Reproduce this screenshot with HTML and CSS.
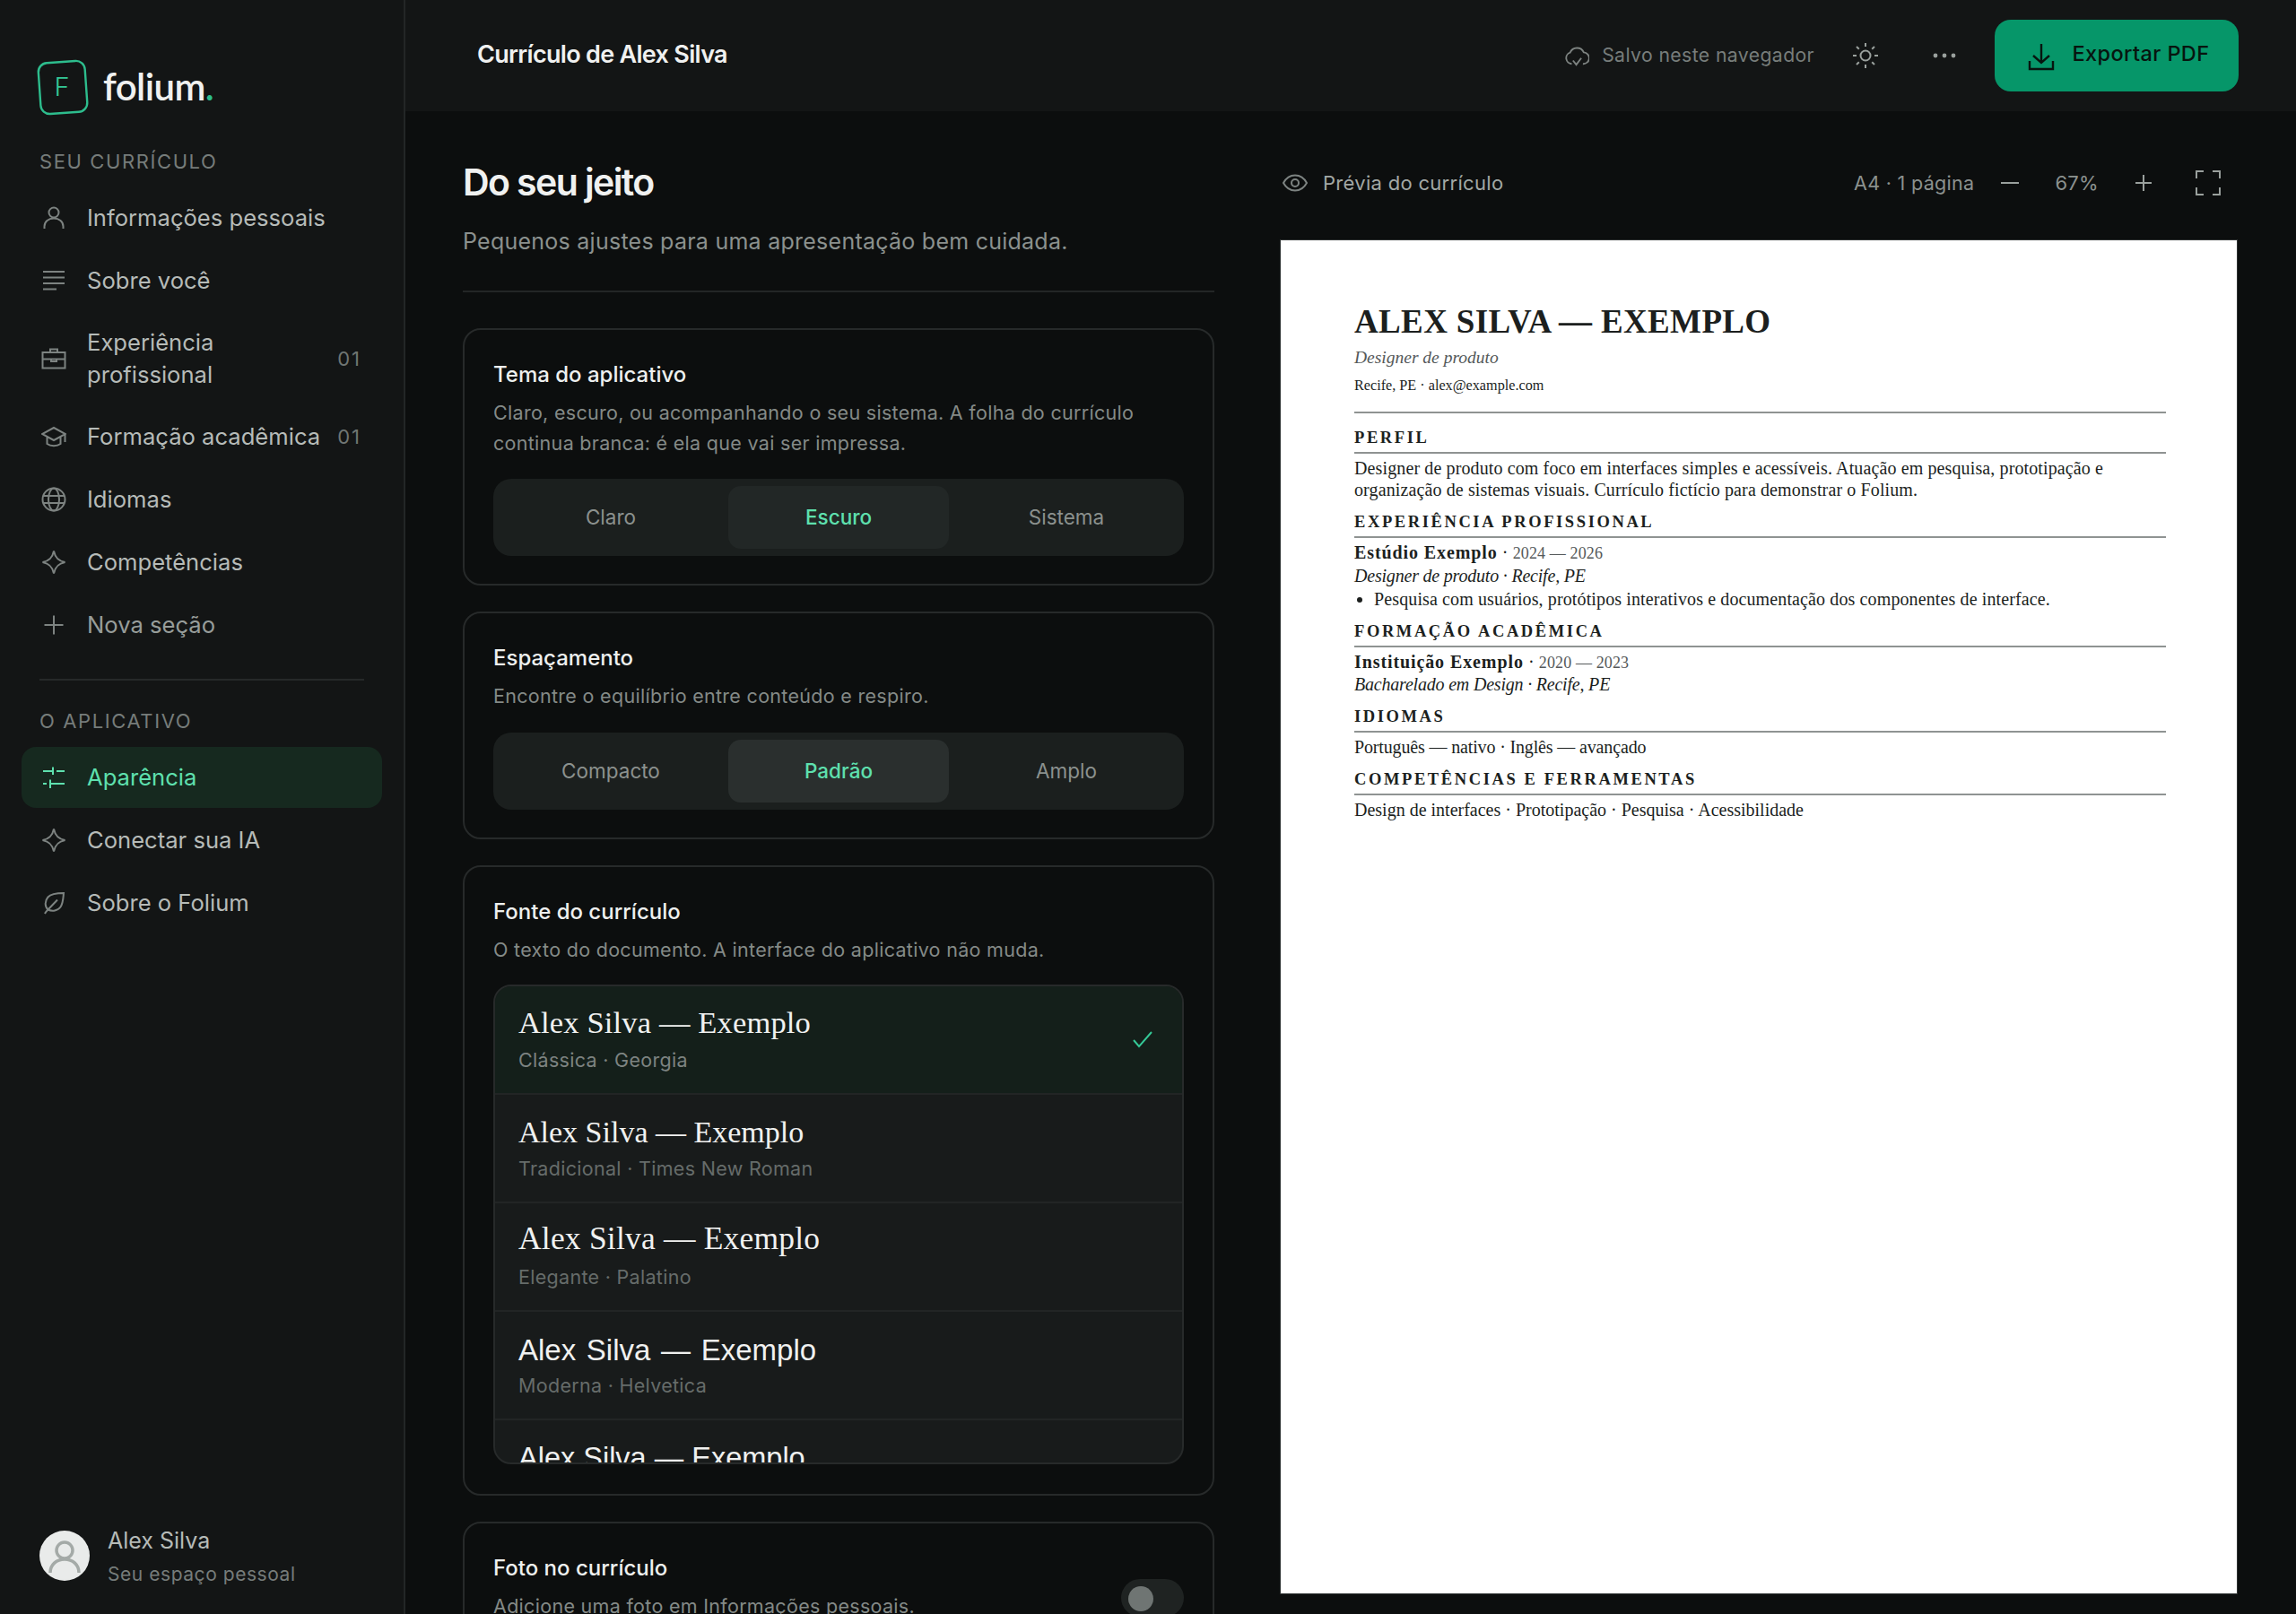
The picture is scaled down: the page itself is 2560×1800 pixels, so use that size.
FILE: index.html
```html
<!DOCTYPE html>
<html lang="pt-BR">
<head>
<meta charset="utf-8">
<title>Folium</title>
<link rel="stylesheet" href="styles.css">
</head>
<body>
<div class="app">
  <aside class="sidebar">
    <div class="brand">
      <svg class="brand-mark" viewBox="0 0 60 68" width="60" height="68"><rect x="4" y="6" width="52" height="57" rx="10" transform="rotate(-4 30 34)" fill="none" stroke="#2dbd8d" stroke-width="2.4"/><text x="29" y="44" text-anchor="middle" class="brand-f">F</text></svg>
      <span class="brand-name">folium<i>.</i></span>
    </div>
    <div class="nav-label">SEU CURRÍCULO</div>
    <nav class="nav">
      <a class="nav-item"><svg class="ico" viewBox="0 0 28 28"><circle cx="14" cy="8" r="5.5"/><path d="M3.500 26v-2.500c0-5.500 4.500-9 10.500-9s10.500 3.500 10.500 9V26"/></svg><span>Informações pessoais</span></a>
      <a class="nav-item"><svg class="ico" viewBox="0 0 28 28"><path d="M2 4h24M2 10.500h24M2 17h24M2 23.500h15"/></svg><span>Sobre você</span></a>
      <a class="nav-item nav-multi"><svg class="ico" viewBox="0 0 28 28"><rect x="1.500" y="7" width="25" height="17.500"/><path d="M10 7V3.500h8V7M1.500 14.500h25M11 14.500v2.500h6v-2.500"/></svg><span>Experiência profissional</span><b class="count">01</b></a>
      <a class="nav-item"><svg class="ico" viewBox="0 0 28 28"><path d="M14 4 1 11l13 7 13-7zM6.500 14.500V22c4 3 11 3 15 0v-7.500M26.500 11v9"/></svg><span>Formação acadêmica</span><b class="count">01</b></a>
      <a class="nav-item"><svg class="ico" viewBox="0 0 28 28"><circle cx="14" cy="14" r="12.500"/><ellipse cx="14" cy="14" rx="6" ry="12.500"/><path d="M2 10h24M2 18h24"/></svg><span>Idiomas</span></a>
      <a class="nav-item"><svg class="ico" viewBox="0 0 28 28"><path d="M14 1.500c1.500 7.500 5 11 12.500 12.500-7.500 1.500-11 5-12.500 12.500C12.500 19 9 15.500 1.500 14 9 12.500 12.500 9 14 1.500z"/></svg><span>Competências</span></a>
      <a class="nav-item nav-add"><svg class="ico" viewBox="0 0 28 28"><path d="M14 3.500v21M3.500 14h21"/></svg><span>Nova seção</span></a>
    </nav>
    <hr class="nav-rule">
    <div class="nav-label nav-label-app">O APLICATIVO</div>
    <nav class="nav">
      <a class="nav-item active"><svg class="ico" viewBox="0 0 28 28"><path d="M2 7h11M17 7h9M13 2.500v8.500M2 21h4M10 21h16M10 16.500V26"/></svg><span>Aparência</span></a>
      <a class="nav-item"><svg class="ico" viewBox="0 0 28 28"><path d="M14 1.500c1.500 7.500 5 11 12.500 12.500-7.500 1.500-11 5-12.500 12.500C12.500 19 9 15.500 1.500 14 9 12.500 12.500 9 14 1.500z"/></svg><span>Conectar sua IA</span></a>
      <a class="nav-item"><svg class="ico" viewBox="0 0 28 28"><path d="M4 26c1-2 2-3 3.500-4.500M25 3c-6 0-14 .5-17.500 4.500C3.500 12 4 18.500 7.500 21.500c4.500 2 11 1.500 14-3C24.500 14 24.500 8 25 3zM7.500 21.500 18 10.500"/></svg><span>Sobre o Folium</span></a>
    </nav>
    <div class="user">
      <div class="avatar"><svg viewBox="0 0 56 56" width="56" height="56"><circle cx="28" cy="22" r="9" /><path d="M12 47c0-9 7-15 16-15s16 6 16 15"/></svg></div>
      <div class="user-text"><div class="user-name">Alex Silva</div><div class="user-sub">Seu espaço pessoal</div></div>
    </div>
  </aside>
  <div class="content">
    <header class="topbar">
      <div class="doc-title">Currículo de Alex Silva</div>
      <div class="saved"><svg class="ico-s" viewBox="0 0 30 26"><path d="M9 23a7 7 0 0 1-2-13.600A9 9 0 0 1 23.500 9a7 7 0 0 1-1 14M10.500 19l4 5 6-8"/></svg><span>Salvo neste navegador</span></div>
      <svg class="sun" viewBox="0 0 30 30"><circle cx="15" cy="15" r="5.500"/><path d="M15 1v4M15 25v4M1 15h4M25 15h4M5 5l2.800 2.800M22.200 22.200 25 25M5 25l2.800-2.800M22.200 7.800 25 5"/></svg>
      <svg class="dots" viewBox="0 0 26 6"><circle cx="3" cy="3" r="2.400"/><circle cx="13" cy="3" r="2.400"/><circle cx="23" cy="3" r="2.400"/></svg>
      <button class="export"><svg class="ico-d" viewBox="0 0 30 32"><path d="M15 2v21M6 15l9 8 9-8M2 21v9h26v-9"/></svg><span>Exportar PDF</span></button>
    </header>
    <div class="workspace">
      <section class="panel">
        <h1 class="panel-title">Do seu jeito</h1>
        <p class="panel-sub">Pequenos ajustes para uma apresentação bem cuidada.</p>
        <hr class="panel-rule">
        <div class="card">
          <h2>Tema do aplicativo</h2>
          <p>Claro, escuro, ou acompanhando o seu sistema. A folha do currículo continua branca: é ela que vai ser impressa.</p>
          <div class="seg"><span>Claro</span><span class="on">Escuro</span><span>Sistema</span></div>
        </div>
        <div class="card">
          <h2>Espaçamento</h2>
          <p>Encontre o equilíbrio entre conteúdo e respiro.</p>
          <div class="seg seg-strong"><span>Compacto</span><span class="on">Padrão</span><span>Amplo</span></div>
        </div>
        <div class="card">
          <h2>Fonte do currículo</h2>
          <p>O texto do documento. A interface do aplicativo não muda.</p>
          <div class="fonts">
            <div class="font sel">
              <div class="sample f-georgia">Alex Silva — Exemplo</div>
              <div class="fname fname-sel">Clássica · Georgia</div>
              <svg class="check" viewBox="0 0 24 20"><path d="M2 11l6 7L22 2"/></svg>
            </div>
            <div class="font"><div class="sample f-times">Alex Silva — Exemplo</div><div class="fname">Tradicional · Times New Roman</div></div>
            <div class="font"><div class="sample f-pal">Alex Silva — Exemplo</div><div class="fname">Elegante · Palatino</div></div>
            <div class="font"><div class="sample f-helv">Alex Silva — Exemplo</div><div class="fname">Moderna · Helvetica</div></div>
            <div class="font"><div class="sample f-last">Alex Silva — Exemplo</div></div>
          </div>
        </div>
        <div class="card card-row">
          <div><h2>Foto no currículo</h2><p class="photo-note">Adicione uma foto em Informações pessoais.</p></div>
          <div class="toggle"><i></i></div>
        </div>
      </section>
      <section class="preview">
        <div class="preview-bar">
          <svg class="eye" viewBox="0 0 28 20"><path d="M1 10c3-5.500 7.500-8.500 13-8.500S24 4.500 27 10c-3 5.500-7.500 8.500-13 8.500S4 15.500 1 10z"/><circle cx="14" cy="10" r="4"/></svg>
          <span class="preview-title">Prévia do currículo</span>
          <span class="preview-meta">A4 · 1 página</span>
          <svg class="pv minus" viewBox="0 0 20 20"><path d="M0 10h20"/></svg>
          <span class="zoom">67%</span>
          <svg class="pv plus" viewBox="0 0 20 20"><path d="M10 1v18M1 10h18"/></svg>
          <svg class="pv full" viewBox="0 0 28 28"><path d="M1 9V1h8M19 1h8v8M27 19v8h-8M9 27H1v-8"/></svg>
        </div>
        <article class="paper">
          <h1 class="cv-name">ALEX SILVA — EXEMPLO</h1>
          <div class="cv-role">Designer de produto</div>
          <div class="cv-contact">Recife, PE · alex@example.com</div>
          <h3 class="cv-h cv-first">PERFIL</h3>
          <p class="cv-p">Designer de produto com foco em interfaces simples e acessíveis. Atuação em pesquisa, prototipação e organização de sistemas visuais. Currículo fictício para demonstrar o Folium.</p>
          <h3 class="cv-h">EXPERIÊNCIA PROFISSIONAL</h3>
          <p class="cv-p"><b>Estúdio Exemplo</b> · <small>2024 — 2026</small></p>
          <p class="cv-p"><em>Designer de produto · Recife, PE</em></p>
          <ul class="cv-ul"><li>Pesquisa com usuários, protótipos interativos e documentação dos componentes de interface.</li></ul>
          <h3 class="cv-h">FORMAÇÃO ACADÊMICA</h3>
          <p class="cv-p"><b>Instituição Exemplo</b> · <small>2020 — 2023</small></p>
          <p class="cv-p"><em>Bacharelado em Design · Recife, PE</em></p>
          <h3 class="cv-h">IDIOMAS</h3>
          <p class="cv-p cv-lang">Português — nativo · Inglês — avançado</p>
          <h3 class="cv-h">COMPETÊNCIAS E FERRAMENTAS</h3>
          <p class="cv-p cv-skills">Design de interfaces · Prototipação · Pesquisa · Acessibilidade</p>
        </article>
      </section>
    </div>
  </div>
</div>
</body>
</html>
```
FILE: styles.css
```css
* { box-sizing: border-box; }
html, body { margin: 0; padding: 0; }
body { background: #0c0e0e; color: #e8eae9; font-family: Inter, "Noto Sans", sans-serif; }
.app { display: flex; width: 2560px; height: 1800px; overflow: hidden; }

.sidebar { width: 452px; flex: none; background: #131515; border-right: 2px solid #232626; display: flex; flex-direction: column; padding: 63px 24px 0; }
.brand { display: flex; align-items: center; gap: 15px; margin-left: 16px; height: 68px; }
.brand-mark { flex: none; }
.brand-f { font: 300 29px Inter, sans-serif; fill: #34c896; }
.brand-name { font: 600 42px/1 Lato, sans-serif; color: #f0f1f0; letter-spacing: -0.6px; margin-top: -3px; }
.brand-name i { font-style: normal; color: #2dbd8d; }
.nav-label { font-size: 22px; line-height: 28px; letter-spacing: 1.6px; color: #767c7a; margin: 35px 0 0 20px; }
.nav-label-app { margin-top: 0; }
.nav { display: flex; flex-direction: column; gap: 2px; margin-top: 15px; }
.nav-label-app + .nav { margin-top: 15px; }
.nav-item { display: flex; align-items: center; gap: 23px; padding: 16px 23px 16px 22px; border-radius: 16px; font-size: 25.600px; line-height: 36px; color: #b6bbb8; }
.nav-multi { padding-top: 15px; padding-bottom: 15px; }
.nav-item span { flex: 1; }
.nav-add { color: #979d9a; }
.count { font-weight: 400; font-size: 22px; letter-spacing: 2px; color: #6f7573; margin-left: -12px; }
.ico { width: 28px; height: 28px; flex: none; fill: none; stroke: #7d8381; stroke-width: 2; }
.active { background: #16291f; color: #5ee0ae; }
.active .ico { stroke: #5ee0ae; }
.nav-rule { border: 0; height: 2px; background: #262929; margin: 26px 20px 31px; }
.user { margin-top: auto; margin-bottom: 27px; margin-left: 20px; display: flex; align-items: center; gap: 20px; }
.avatar { width: 56px; height: 56px; border-radius: 50%; background: #e9ebea; overflow: hidden; flex: none; }
.avatar svg { display: block; fill: none; stroke: #a4aaa7; stroke-width: 3.5; }
.user-text { margin-top: 4px; }
.user-name { font-size: 25px; line-height: 34px; color: #b6bbb8; }
.user-sub { font-size: 21px; line-height: 34px; letter-spacing: 0.550px; color: #767c7a; margin-top: 4px; }

.content { flex: 1; min-width: 0; display: flex; flex-direction: column; }
.topbar { height: 124px; flex: none; background: #131515; display: flex; align-items: center; padding: 0 64px 0 80px; }
.doc-title { font-size: 27px; font-weight: 600; letter-spacing: -0.7px; color: #f0f1f0; margin: -3px auto 0 0; }
.saved { display: flex; align-items: center; gap: 14px; font-size: 21.200px; letter-spacing: 0.4px; color: #777d7b; margin-top: -2px; }
.ico-s { width: 28px; height: 24px; fill: none; stroke: #7d8381; stroke-width: 2; margin-top: 2px; }
.sun { width: 30px; height: 30px; margin-left: 42px; fill: none; stroke: #9aa09d; stroke-width: 2; }
.dots { width: 26px; height: 6px; margin-left: 60px; fill: #9aa09d; }
.export { width: 272px; height: 80px; margin-left: 43px; border: 0; border-radius: 18px; background: #069669; display: flex; align-items: center; justify-content: center; gap: 20px; font: 500 23.500px Inter, sans-serif; letter-spacing: 0.4px; color: #07150f; padding: 0 0 6px 4px; }
.ico-d { width: 30px; height: 32px; fill: none; stroke: #07150f; stroke-width: 2.400; margin-top: 8px; }

.workspace { flex: 1; min-height: 0; display: flex; padding: 0 64px 0 64px; gap: 73px; }
.panel { width: 838px; flex: none; }
.panel-title { margin: 55px 0 0; font-size: 41px; line-height: 48px; font-weight: 600; letter-spacing: -1.6px; color: #f0f1f0; }
.panel-sub { margin: 24px 0 0; font-size: 25px; line-height: 36px; letter-spacing: 0.25px; color: #8b918e; }
.panel-rule { border: 0; height: 2px; background: #232626; margin: 37px 0 40px; }
.card { border: 2px solid #272a2a; border-radius: 20px; padding: 33px 32px 31px; margin-bottom: 29px; }
.card h2 { margin: 0; font-size: 24px; line-height: 34px; font-weight: 450; color: #eef0ef; }
.card p { margin: 8px 0 0; font-size: 21.500px; line-height: 34px; letter-spacing: 0.3px; color: #848a87; }
.seg { display: grid; grid-template-columns: repeat(3, 1fr); gap: 8px; height: 86px; padding: 8px; margin-top: 23px; background: #1b1f1e; border-radius: 20px; text-align: center; font-size: 22.500px; line-height: 70px; color: #8b918e; }
.seg .on { background: #222726; border-radius: 14px; color: #5ee0ae; font-weight: 500; }
.seg-strong { margin-top: 24px; }
.seg-strong .on { background: #2a2f2e; }
.fonts { height: 535px; margin: 22px 0 2px; overflow: hidden; background: #181b1b; border: 2px solid #272a2a; border-radius: 20px; }
.font { position: relative; height: 121px; padding: 20px 26px 0; border-bottom: 2px solid #222525; }
.sel { background: #141f1a; }
.sample { height: 44px; line-height: 44px; font-family: "Liberation Serif", serif; color: #f0f1f0; white-space: nowrap; }
.f-georgia { font-size: 34.500px; letter-spacing: 0.15px; margin-top: -2px; height: 46px; }
.f-times { font-size: 34px; }
.f-pal { font-size: 35.500px; letter-spacing: 0.2px; margin-top: -3px; height: 47px; }
.f-helv { font-family: "Liberation Sans", sans-serif; font-size: 33px; word-spacing: 2.500px; margin-top: 1px; height: 43px; }
.f-last { font-family: "Liberation Sans", sans-serif; font-size: 32.500px; }
.fname { margin-top: 2px; font-size: 21.500px; line-height: 32px; letter-spacing: 0.3px; color: #666c6a; }
.fname-sel { color: #7d8381; }
.check { position: absolute; right: 32px; top: 49px; width: 24px; height: 20px; fill: none; stroke: #34c896; stroke-width: 2; }
.card-row { display: flex; justify-content: space-between; }
.card .photo-note { white-space: nowrap; }
.toggle { width: 70px; height: 42px; margin-top: 29px; flex: none; border-radius: 21px; background: #1f2322; padding: 8px; }
.toggle i { display: block; width: 28px; height: 28px; border-radius: 50%; background: #6f7573; }

.preview { width: 1068px; flex: none; }
.preview-bar { height: 143px; padding-top: 16px; display: flex; align-items: center; font-size: 22px; letter-spacing: 0.3px; color: #8b918e; }
.eye { width: 28px; height: 20px; margin: 0 17px 0 3px; fill: none; stroke: #7d8381; stroke-width: 2; }
.preview-title { color: #a2a8a5; margin-right: auto; }
.preview-meta { font-size: 21.500px; }
.pv { fill: none; stroke: #9aa09d; stroke-width: 2; }
.minus { width: 20px; height: 20px; margin-left: 30px; }
.zoom { margin-left: 40px; }
.plus { width: 20px; height: 20px; margin-left: 40px; }
.full { width: 28px; height: 28px; margin: 0 19px 0 48px; }
.paper { height: 1511px; background: #fff; border: 1px solid #2f3333; padding: 69px 79px 0 82px; color: #1c1f1e; font-family: "Liberation Serif", serif; }
.cv-name { margin: 0; font-size: 37px; line-height: 44px; font-weight: 700; letter-spacing: 0.35px; }
.cv-role { margin-top: 6px; font-size: 19.500px; line-height: 24px; font-style: italic; color: #55595a; }
.cv-contact { margin-top: 7px; font-size: 16.200px; line-height: 24px; }
.cv-h { margin: 11.500px 0 4px; font-size: 18.500px; line-height: 24px; font-weight: 700; letter-spacing: 2.600px; padding-bottom: 4px; border-bottom: 2px solid #8f9392; }
.cv-first { margin-top: 17px; padding-top: 15px; border-top: 2px solid #8f9392; }
.cv-p { margin: 0; font-size: 20px; line-height: 24.400px; letter-spacing: 0.12px; }
.cv-p b { letter-spacing: 0.9px; }
.cv-p em { letter-spacing: -0.2px; }
.cv-p small { font-size: 18px; color: #55595a; }
.cv-lang { letter-spacing: -0.15px; }
.cv-skills { letter-spacing: 0; }
.cv-ul { margin: 2px 0 0; padding-left: 22px; font-size: 20px; line-height: 24.400px; letter-spacing: 0.12px; }
```
